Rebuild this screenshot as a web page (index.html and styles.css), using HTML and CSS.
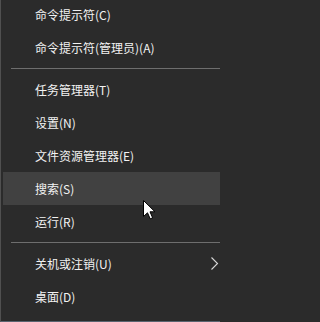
FILE: index.html
```html
<!DOCTYPE html>
<html>
<head>
<meta charset="utf-8">
<link rel="stylesheet" href="styles.css">
</head>
<body>
<div class="menu">
  <div class="group first">
    <div class="item">命令提示符(C)</div>
    <div class="item">命令提示符(管理员)(A)</div>
  </div>
  <div class="sep"></div>
  <div class="group">
    <div class="item">任务管理器(T)</div>
    <div class="item">设置(N)</div>
    <div class="item">文件资源管理器(E)</div>
    <div class="item hover">搜索(S)</div>
    <div class="item">运行(R)</div>
  </div>
  <div class="sep"></div>
  <div class="group">
    <div class="item">关机或注销(U)<svg class="chev" width="8" height="13" viewBox="0 0 8 13"><polyline points="0.5,0.5 6.5,6.5 0.5,12.5" fill="none" stroke="#d8d8d8" stroke-width="1.1"/></svg></div>
    <div class="item">桌面(D)</div>
  </div>
  <svg class="cursor" width="13" height="20" viewBox="0 0 13 20"><path d="M0.5,0.5 L0.5,16.5 L4.5,12.8 L7.2,18.8 L9.6,17.8 L7,11.8 L12,11.8 Z" fill="#ffffff" stroke="#000000" stroke-width="1" stroke-linejoin="miter"/></svg>
</div>
</body>
</html>
```

FILE: styles.css
```css
html, body {
  margin: 0;
  padding: 0;
  background: #2b2b2b;
}
.menu {
  position: relative;
  width: 220px;
  height: 322px;
  box-sizing: border-box;
  background: #2b2b2b;
  border-left: 1px solid #505050;
  border-bottom: 1px solid #5a6470;
  overflow: hidden;
  font-family: "Noto Sans CJK SC", "Noto Sans", sans-serif;
  font-size: 12px;
  color: #f2f2f2;
}
.group.first {
  margin-top: -2px;
}
.item {
  height: 33px;
  display: flex;
  align-items: center;
  padding-left: 32px;
  margin-left: 2px;
  white-space: nowrap;
}
.item.hover {
  background: #414141;
}
.sep {
  margin: 4px 0 4px 10px;
  height: 1px;
  background: #6e6e6e;
}
.sep + .group .item:first-child {
  margin-top: 0;
}
.chev {
  margin-left: auto;
  margin-right: 1px;
}
.cursor {
  position: absolute;
  left: 142px;
  top: 200px;
}
```
